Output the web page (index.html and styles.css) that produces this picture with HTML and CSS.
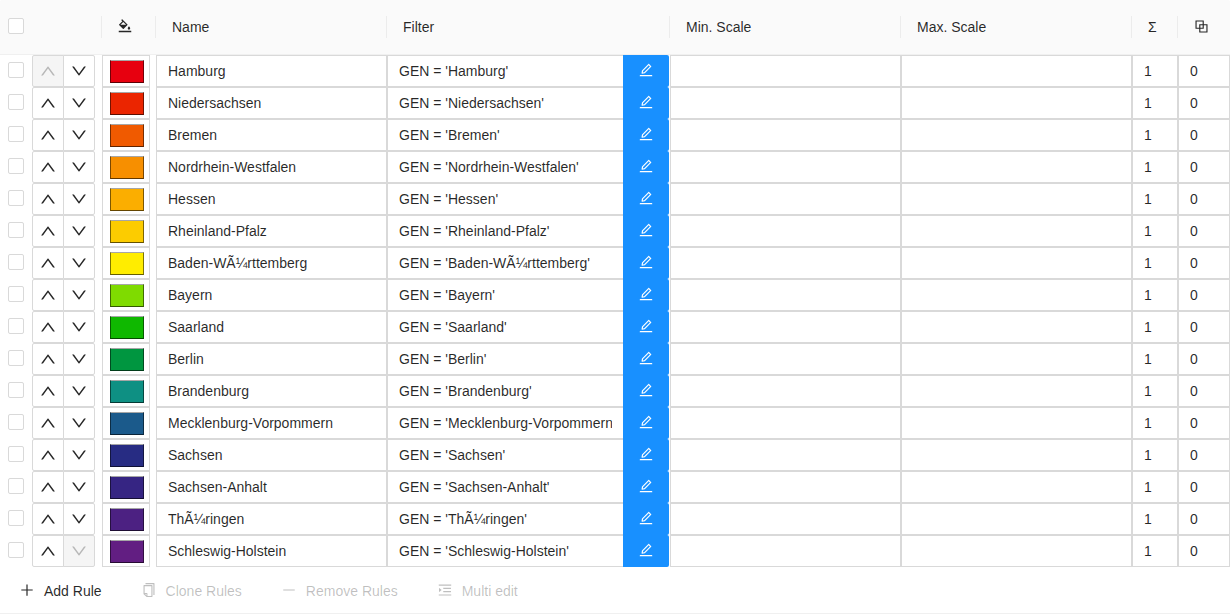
FILE: index.html
```html
<!DOCTYPE html>
<html lang="en">
<head>
<meta charset="utf-8">
<title>Rules</title>
<link rel="stylesheet" href="styles.css">
</head>
<body>
<svg class="sprite" aria-hidden="true">
  <symbol id="up" viewBox="64 64 896 896"><path d="M890.5 755.3L537.9 269.2c-12.8-17.6-39-17.6-51.7 0L133.5 755.3A8 8 0 00140 768h75c5.1 0 9.9-2.5 12.9-6.6L512 369.8l284.1 391.6c3 4.1 7.8 6.6 12.9 6.6h75c6.5 0 10.3-7.4 6.5-12.7z"/></symbol>
  <symbol id="down" viewBox="64 64 896 896"><path d="M884 256h-75c-5.1 0-9.9 2.5-12.9 6.6L512 654.2 227.9 262.6c-3-4.1-7.8-6.6-12.9-6.6h-75c-6.5 0-10.3 7.4-6.5 12.7l352.6 486.1c12.8 17.6 39 17.6 51.7 0l352.6-486.1c3.9-5.3.1-12.7-6.4-12.7z"/></symbol>
  <symbol id="edit" viewBox="64 64 896 896"><path d="M257.7 752c2 0 4-.2 6-.5L431.9 722c2-.4 3.9-1.3 5.3-2.8l423.9-423.9a9.96 9.96 0 000-14.1L694.9 114.9c-1.9-1.9-4.4-2.9-7.1-2.9s-5.2 1-7.1 2.9L256.8 538.8c-1.5 1.5-2.4 3.3-2.8 5.3l-29.5 168.2a33.5 33.5 0 009.4 29.8c6.6 6.4 14.9 9.9 23.8 9.9zm67.4-174.4L687.8 215l73.3 73.3-362.7 362.6-88.9 15.7 15.6-89zM880 836H144c-17.7 0-32 14.3-32 32v36c0 4.4 3.6 8 8 8h784c4.4 0 8-3.6 8-8v-36c0-17.7-14.3-32-32-32z"/></symbol>
  <symbol id="fill" viewBox="64 64 896 896"><path d="M766.4 744.3c43.7 0 79.4-36.2 79.4-80.5 0-53.5-79.4-140.8-79.4-140.8S687 610.3 687 663.8c0 44.3 35.7 80.5 79.4 80.5zm-377.1-44.1c7.1 7.1 18.6 7.1 25.6 0l256.1-256c7.1-7.1 7.1-18.6 0-25.6l-256-256c-.6-.6-1.3-1.2-2-1.7l-78.2-78.2a9.11 9.11 0 00-12.8 0l-48 48a9.11 9.11 0 000 12.8l67.2 67.2-207.8 207.9c-7.1 7.1-7.1 18.6 0 25.6l255.9 256zm12.9-448.6l178.9 178.9H223.4l178.8-178.9zM904 816H120c-4.4 0-8 3.6-8 8v80c0 4.4 3.6 8 8 8h784c4.4 0 8-3.6 8-8v-80c0-4.4-3.6-8-8-8z"/></symbol>
  <symbol id="block" viewBox="64 64 896 896"><path d="M856 376H648V168c0-8.8-7.2-16-16-16H168c-8.8 0-16 7.2-16 16v464c0 8.8 7.2 16 16 16h208v208c0 8.8 7.2 16 16 16h464c8.8 0 16-7.2 16-16V392c0-8.8-7.2-16-16-16zm-480 16v188H220V220h360v156H392c-8.8 0-16 7.2-16 16zm204 52v136H444V444h136zm224 360H444V648h188c8.8 0 16-7.2 16-16V444h156v360z"/></symbol>
  <symbol id="plus" viewBox="64 64 896 896"><path d="M474 152h76v322h326v76H550v322h-76V550H148v-76h326z"/></symbol>
  <symbol id="minus" viewBox="64 64 896 896"><path d="M872 474H152c-4.400 0-8 3.600-8 8v60c0 4.400 3.600 8 8 8h720c4.400 0 8-3.600 8-8v-60c0-4.400-3.600-8-8-8z"/></symbol>
  <symbol id="copy" viewBox="64 64 896 896"><path d="M832 64H296c-4.400 0-8 3.600-8 8v56c0 4.400 3.600 8 8 8h496v688c0 4.400 3.600 8 8 8h56c4.400 0 8-3.600 8-8V96c0-17.700-14.300-32-32-32zM704 192H192c-17.700 0-32 14.300-32 32v530.700c0 8.500 3.400 16.600 9.400 22.600l173.300 173.300c2.200 2.200 4.700 4 7.400 5.500v1.900h4.200c3.500 1.300 7.200 2 11 2H704c17.700 0 32-14.300 32-32V224c0-17.700-14.300-32-32-32zM350 856.200L263.900 770H350v86.200zM664 888H414V746c0-22.100-17.900-40-40-40H232V264h432v624z"/></symbol>
  <symbol id="multi" viewBox="64 64 896 896"><path d="M408 442h480c4.400 0 8-3.600 8-8v-56c0-4.400-3.600-8-8-8H408c-4.400 0-8 3.600-8 8v56c0 4.400 3.600 8 8 8zm-8 204c0 4.400 3.600 8 8 8h480c4.400 0 8-3.600 8-8v-56c0-4.400-3.600-8-8-8H408c-4.400 0-8 3.600-8 8v56zm504-486H120c-4.400 0-8 3.600-8 8v56c0 4.400 3.600 8 8 8h784c4.400 0 8-3.600 8-8v-56c0-4.400-3.600-8-8-8zm0 632H120c-4.400 0-8 3.600-8 8v56c0 4.400 3.600 8 8 8h784c4.400 0 8-3.600 8-8v-56c0-4.400-3.600-8-8-8zM142.400 642.100L298.700 519a8.840 8.840 0 000-13.900L142.400 381.900c-5.800-4.600-14.400-.5-14.400 6.900v246.300a8.900 8.900 0 0014.400 7z"/></symbol>
</svg>
<main class="rule-table">
  <header class="grid head">
    <div class="check-cell"><span class="checkbox"></span></div>
    <div class="th"></div>
    <div class="th icon-th"><svg class="icon"><use href="#fill"/></svg></div>
    <div class="th">Name</div>
    <div class="th">Filter</div>
    <div class="th">Min. Scale</div>
    <div class="th">Max. Scale</div>
    <div class="th">Σ</div>
    <div class="th last"><svg class="icon"><use href="#block"/></svg></div>
  </header>
  <section id="rows"></section>
  <footer class="toolbar">
    <button class="action add"><svg class="icon"><use href="#plus"/></svg>Add Rule</button>
    <button class="action clone" disabled><svg class="icon"><use href="#copy"/></svg>Clone Rules</button>
    <button class="action remove" disabled><svg class="icon"><use href="#minus"/></svg>Remove Rules</button>
    <button class="action multi" disabled><svg class="icon"><use href="#multi"/></svg>Multi edit</button>
  </footer>
</main>
<script src="script.js"></script>
</body>
</html>
```

FILE: styles.css
```css
* { box-sizing: border-box; }
body {
  margin: 0;
  background: #fff;
  color: rgba(0, 0, 0, 0.85);
  font: 14px/22px "Liberation Sans", Arial, sans-serif;
}
.sprite { display: none; }
.icon { display: block; flex: none; width: 14px; height: 14px; fill: currentColor; }

.rule-table { height: 614px; border-bottom: 1px solid #f0f0f0; overflow: hidden; }
.grid {
  display: grid;
  grid-template-columns: 32px 70px 54px 231px 283px 231px 231px 46px 52px;
}

.head {
  height: 55px;
  align-items: center;
  background: #fafafa;
  border-bottom: 1px solid #f0f0f0;
  border-radius: 2px 2px 0 0;
}
.th { display: flex; align-items: center; height: 22px; padding-left: 16px; border-right: 1px solid #ececec; }
.th.last { border-right: 0; }
.icon-th .icon, .last .icon { margin-bottom: 2px; }
.last .icon { width: 15px; height: 15px; }

.check-cell { padding-left: 8px; }
.checkbox { display: block; width: 16px; height: 16px; border: 1px solid #d9d9d9; border-radius: 2px; background: #fff; }
.head .checkbox { margin-bottom: 2px; }
.row { height: 32px; }
.row .checkbox { margin-top: 7px; }

.move { display: flex; }
.move-btn {
  display: flex;
  align-items: center;
  justify-content: center;
  width: 32px;
  height: 32px;
  padding: 0;
  border: 1px solid #d9d9d9;
  border-radius: 2px 0 0 2px;
  background: #fff;
  color: rgba(0, 0, 0, 0.85);
}
.move-btn + .move-btn { margin-left: -1px; border-radius: 0 2px 2px 0; }
.move-btn:disabled { background: #f5f5f5; color: rgba(0, 0, 0, 0.25); }
.move-btn .icon { width: 16px; height: 16px; }

.symbol { width: 48px; height: 32px; padding: 4px 7px; border: 1px solid #d9d9d9; }
.swatch {
  display: block;
  width: 34px;
  height: 23px;
  border: 1px solid rgba(0, 0, 0, 0.5);
  border-top-color: #a6a6a6;
  border-bottom-color: rgba(0, 0, 0, 0.6);
}

.field { height: 32px; padding: 4px 11px; border: 1px solid #d9d9d9; overflow: hidden; white-space: nowrap; }
.field-text { display: block; overflow: hidden; }
.filter { display: flex; padding-right: 1px; }
.filter .field { width: 236px; padding-right: 11px; border-right: 0; }
.edit-btn {
  display: flex;
  justify-content: center;
  width: 46px;
  height: 32px;
  padding: 8px 0 0;
  border: 0;
  border-radius: 0 2px 2px 0;
  background: #1890ff;
  color: #fff;
}

.toolbar { display: flex; padding-top: 8px; }
.action {
  display: flex;
  align-items: center;
  gap: 10px;
  height: 32px;
  padding: 0;
  border: 0;
  background: none;
  color: rgba(0, 0, 0, 0.85);
  font: inherit;
}
.action .icon { margin-bottom: 2px; }
.action:disabled { color: rgba(0, 0, 0, 0.25); }
.add { margin-left: 20px; }
.clone { margin-left: 40px; }
.remove { margin-left: 40px; }
.multi { margin-left: 40px; }
```

FILE: script.js
```js
const rules = [
  ["Hamburg", "#e7000f"],
  ["Niedersachsen", "#eb2500"],
  ["Bremen", "#f05a00"],
  ["Nordrhein-Westfalen", "#f78f00"],
  ["Hessen", "#fbae00"],
  ["Rheinland-Pfalz", "#fccc00"],
  ["Baden-WÃ¼rttemberg", "#ffed00"],
  ["Bayern", "#7fdb00"],
  ["Saarland", "#0fb800"],
  ["Berlin", "#009640"],
  ["Brandenburg", "#0e9083"],
  ["Mecklenburg-Vorpommern", "#1b5a8b"],
  ["Sachsen", "#272c83"],
  ["Sachsen-Anhalt", "#362583"],
  ["ThÃ¼ringen", "#4c2182"],
  ["Schleswig-Holstein", "#621e82"]
];

const icon = (name) => `<svg class="icon"><use href="#${name}"/></svg>`;
const field = (text) => `<div class="field"><span class="field-text">${text}</span></div>`;

document.getElementById("rows").innerHTML = rules.map(([name, color], i) => `
  <div class="grid row">
    <div class="check-cell"><span class="checkbox"></span></div>
    <div class="move">
      <button class="move-btn" ${i === 0 ? "disabled" : ""}>${icon("up")}</button>
      <button class="move-btn" ${i === rules.length - 1 ? "disabled" : ""}>${icon("down")}</button>
    </div>
    <div class="symbol"><span class="swatch" style="background:${color}"></span></div>
    ${field(name)}
    <div class="filter">${field(`GEN = '${name}'`)}<button class="edit-btn">${icon("edit")}</button></div>
    ${field("")}
    ${field("")}
    ${field("1")}
    ${field("0")}
  </div>`).join("");
```
